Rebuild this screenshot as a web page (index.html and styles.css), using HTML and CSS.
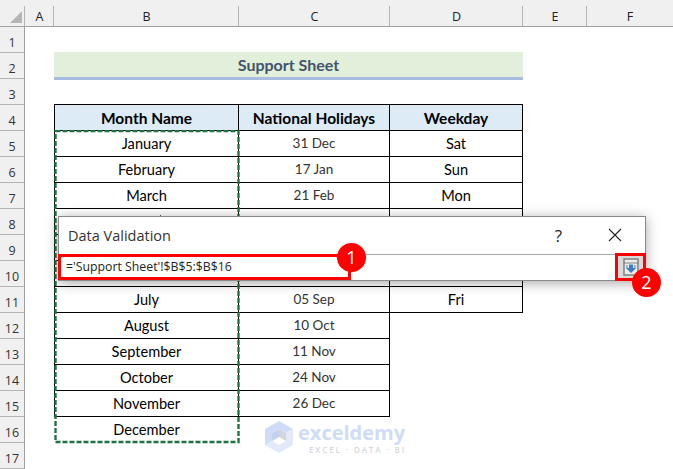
FILE: index.html
```html
<!DOCTYPE html>
<html>
  <head>
    <title>Data Validation</title>
    <link rel="stylesheet" href="styles.css">
  </head>
  <body>
    <div class="sheet">
      <div class="corner"><div class="corner-mark"></div></div>
      <div class="col-head">A</div>
      <div class="col-head">B</div>
      <div class="col-head">C</div>
      <div class="col-head">D</div>
      <div class="col-head">E</div>
      <div class="col-head col-last">F</div>

      <div class="row-head">1</div>
      <div class="blank-row"></div>

      <div class="row-head">2</div>
      <div class="gap"></div>
      <div class="sheet-title">Support Sheet</div>
      <div class="rest"></div>

      <div class="row-head">3</div>
      <div class="blank-row"></div>

      <div class="row-head">4</div>
      <div class="gap"></div>
      <div class="cell head first top">Month Name</div>
      <div class="cell head top">National Holidays</div>
      <div class="cell head top">Weekday</div>
      <div class="rest"></div>

      <div class="row-head">5</div>
      <div class="gap"></div>
      <div class="cell first">January</div>
      <div class="cell date">31 Dec</div>
      <div class="cell">Sat</div>
      <div class="rest"></div>

      <div class="row-head">6</div>
      <div class="gap"></div>
      <div class="cell first">February</div>
      <div class="cell date">17 Jan</div>
      <div class="cell">Sun</div>
      <div class="rest"></div>

      <div class="row-head">7</div>
      <div class="gap"></div>
      <div class="cell first">March</div>
      <div class="cell date">21 Feb</div>
      <div class="cell">Mon</div>
      <div class="rest"></div>

      <div class="row-head">8</div>
      <div class="gap"></div>
      <div class="cell first"><div class="tick"></div></div>
      <div class="cell date"></div>
      <div class="cell"></div>
      <div class="rest"></div>

      <div class="row-head">9</div>
      <div class="gap"></div>
      <div class="cell first"></div>
      <div class="cell date"></div>
      <div class="cell"></div>
      <div class="rest"></div>

      <div class="row-head">10</div>
      <div class="gap"></div>
      <div class="cell first"></div>
      <div class="cell date"></div>
      <div class="cell"></div>
      <div class="rest"></div>

      <div class="row-head">11</div>
      <div class="gap"></div>
      <div class="cell first">July</div>
      <div class="cell date">05 Sep</div>
      <div class="cell">Fri</div>
      <div class="rest"></div>

      <div class="row-head">12</div>
      <div class="gap"></div>
      <div class="cell first">August</div>
      <div class="cell date">10 Oct</div>
      <div class="rest-wide"></div>

      <div class="row-head">13</div>
      <div class="gap"></div>
      <div class="cell first">September</div>
      <div class="cell date">11 Nov</div>
      <div class="rest-wide"></div>

      <div class="row-head">14</div>
      <div class="gap"></div>
      <div class="cell first">October</div>
      <div class="cell date">24 Nov</div>
      <div class="rest-wide"></div>

      <div class="row-head">15</div>
      <div class="gap"></div>
      <div class="cell first">November</div>
      <div class="cell date">26 Dec</div>
      <div class="rest-wide"></div>

      <div class="row-head">16</div>
      <div class="gap"></div>
      <div class="cell first last">December</div>
      <div class="blank-wide"></div>

      <div class="row-head">17</div>
      <div class="blank-row"></div>
    </div>

    <!-- copy range marching ants -->
    <svg class="ants" width="187" height="315" viewBox="0 0 187 315">
      <rect x="1.5" y="1" width="183" height="311" fill="none" stroke="#217346" stroke-width="2.4" stroke-dasharray="5 2"/>
    </svg>

    <div class="watermark">
      <svg class="wm-logo" width="28" height="32" viewBox="0 0 28 32">
        <polygon points="14,0 28,8 21,12 14,8 7,12 7,20 0,24 0,8" fill="#cfdcf7"/>
        <polygon points="14,8 21,12 21,20 14,16" fill="#d4d6dc"/>
        <polygon points="14,8 7,12 7,20 14,16" fill="#c3d2f1"/>
        <polygon points="28,8 28,24 14,32 0,24 7,20 14,24 21,20 21,12" fill="#e2eafa"/>
      </svg>
      <div class="wm-text">
        <div class="wm-name">exceldemy</div>
        <div class="wm-sub">EXCEL · DATA · BI</div>
      </div>
    </div>

    <div class="dialog">
      <div class="dialog-title">
        <span class="dialog-name">Data Validation</span>
        <span class="dialog-help">?</span>
        <svg class="dialog-close" width="14" height="14" viewBox="0 0 14 14">
          <path d="M1 1 L13 13 M13 1 L1 13" stroke="#222" stroke-width="1.1" fill="none"/>
        </svg>
      </div>
      <div class="dialog-input">
        <div class="range-box">='Support Sheet'!$B$5:$B$16</div>
        <div class="range-button">
          <svg width="16" height="18" viewBox="0 0 16 18">
            <rect x="1" y="1" width="14" height="16" fill="#ececec" stroke="#808080" stroke-width="1.5"/>
            <path d="M1 5 H15" stroke="#808080"/>
            <path d="M3 7 H5 V10 H3 Z M11 7 H13 V10 H11 Z" fill="#8fb3dc"/>
            <path d="M6 6.5 H10 V10 H13 L8 15 L3 10 H6 Z" fill="#3a7cc6"/>
          </svg>
        </div>
      </div>
      <div class="badge badge-one">1</div>
      <div class="badge badge-two">2</div>
    </div>
  </body>
</html>
```

FILE: styles.css
```css
body {
  margin: 0;
  width: 673px;
  height: 469px;
  overflow: hidden;
  position: relative;
  background: #fff;
  font-family: "Lato", "Liberation Sans", sans-serif;
  color: #000;
}

.sheet {
  display: grid;
  grid-template-columns: 25px 29px 185px 151px 133px 64px 86px;
  grid-template-rows: 27px repeat(17, 26px);
}

.corner {
  background: linear-gradient(#b4b4b4, #b4b4b4) right bottom / 1px 20px no-repeat, #f0f0f0;
  border-bottom: 1px solid #a0a0a0;
  box-sizing: border-box;
  position: relative;
}

.corner-mark {
  position: absolute;
  right: 3px;
  bottom: 3px;
  width: 0;
  height: 0;
  border-left: 12px solid transparent;
  border-bottom: 12px solid #b5b5b5;
}

.col-head {
  background: linear-gradient(#b4b4b4, #b4b4b4) right bottom / 1px 20px no-repeat, #f0f0f0;
  border-bottom: 1px solid #a0a0a0;
  box-sizing: border-box;
  padding-top: 7px;
  text-align: center;
  font-family: "Open Sans", sans-serif;
  font-size: 12.5px;
  line-height: 19px;
  color: #222;
}

.col-last {
  background: #f0f0f0;
}

.row-head {
  background: #f0f0f0;
  border-right: 1px solid #a0a0a0;
  border-bottom: 1px solid #b4b4b4;
  box-sizing: border-box;
  text-align: center;
  font-family: "Open Sans", sans-serif;
  font-size: 12.5px;
  line-height: 31px;
  color: #333;
}

.blank-row {
  grid-column: 2 / -1;
}

.rest {
  grid-column: 6 / -1;
}

.rest-wide {
  grid-column: 5 / -1;
}

.blank-wide {
  grid-column: 4 / -1;
}

.sheet-title {
  grid-column: 3 / 6;
  background: #e2efda;
  border-bottom: 3px solid #a9bbdf;
  margin: -1px 0;
  box-sizing: border-box;
  text-align: center;
  font-weight: 700;
  font-size: 16px;
  line-height: 26px;
  color: #44546a;
}

.cell {
  border-right: 1px solid #000;
  border-bottom: 1px solid #000;
  box-sizing: border-box;
  text-align: center;
  font-size: 14.6px;
  line-height: 26px;
}

.first {
  border-left: 1px solid #000;
}

.top {
  border-top: 1px solid #000;
  margin-top: -1px;
}

.head {
  background: #ddebf7;
  font-weight: 700;
  font-size: 15.5px;
  line-height: 26px;
}

.date {
  color: #333;
  font-size: 13.5px;
  line-height: 25px;
}

.last {
  border-color: transparent;
}

/* top of a hidden label, just showing above the dialog */
.tick {
  width: 1px;
  height: 2px;
  margin: 6px 0 0 105px;
  background: #555;
}

/* things that lie over the sheet */
.ants {
  position: absolute;
  left: 54px;
  top: 130px;
}

.watermark {
  position: absolute;
  left: 265px;
  top: 421px;
  display: flex;
  gap: 5px;
  align-items: flex-start;
}

.wm-name {
  font-family: "Open Sans", sans-serif;
  font-weight: 700;
  font-size: 20px;
  line-height: 23px;
  color: #cfdcf7;
}

.wm-sub {
  font-family: "Open Sans", sans-serif;
  font-weight: 600;
  font-size: 8px;
  letter-spacing: 1.9px;
  line-height: 9px;
  margin-top: 1px;
  color: #d6d8de;
  padding-left: 11px;
}

.dialog {
  position: absolute;
  left: 58px;
  top: 216px;
  width: 588px;
  height: 65px;
  box-sizing: border-box;
  background: #fff;
  border: 1px solid #8a8a8a;
  box-shadow: 0 2px 12px rgba(0, 0, 0, 0.35);
}

.dialog-title {
  height: 37px;
  display: flex;
  align-items: center;
  padding-left: 9px;
  border-bottom: 1px solid #a9a9a9;
}

.dialog-name {
  flex: 1;
  font-family: "Open Sans", sans-serif;
  font-size: 14.5px;
  color: #333;
}

.dialog-help {
  font-family: "Open Sans", sans-serif;
  font-size: 17px;
  color: #222;
  margin-right: 46px;
}

.dialog-close {
  margin: -2px 23px 0 0;
}

.dialog-input {
  display: flex;
  justify-content: space-between;
}

.range-box {
  width: 293px;
  height: 26px;
  box-sizing: border-box;
  margin: -1px 0 0 -1px;
  border: 3px solid #f00;
  font-family: "Open Sans", sans-serif;
  font-size: 12.3px;
  line-height: 20px;
  padding-left: 5px;
  color: #222;
}

.range-button {
  width: 31px;
  height: 28px;
  box-sizing: border-box;
  margin: -2px -1px 0 0;
  border: 3px solid #f00;
  background: #d9d9d9;
  display: flex;
  align-items: center;
  justify-content: center;
}

.badge {
  position: absolute;
  width: 29px;
  height: 29px;
  border-radius: 50%;
  background: #f00;
  color: #fff;
  text-align: center;
  font-family: "Open Sans", sans-serif;
  font-size: 18px;
  line-height: 29px;
}

.badge-one {
  left: 278px;
  top: 26px;
}

.badge-two {
  left: 573px;
  top: 51px;
}
```
